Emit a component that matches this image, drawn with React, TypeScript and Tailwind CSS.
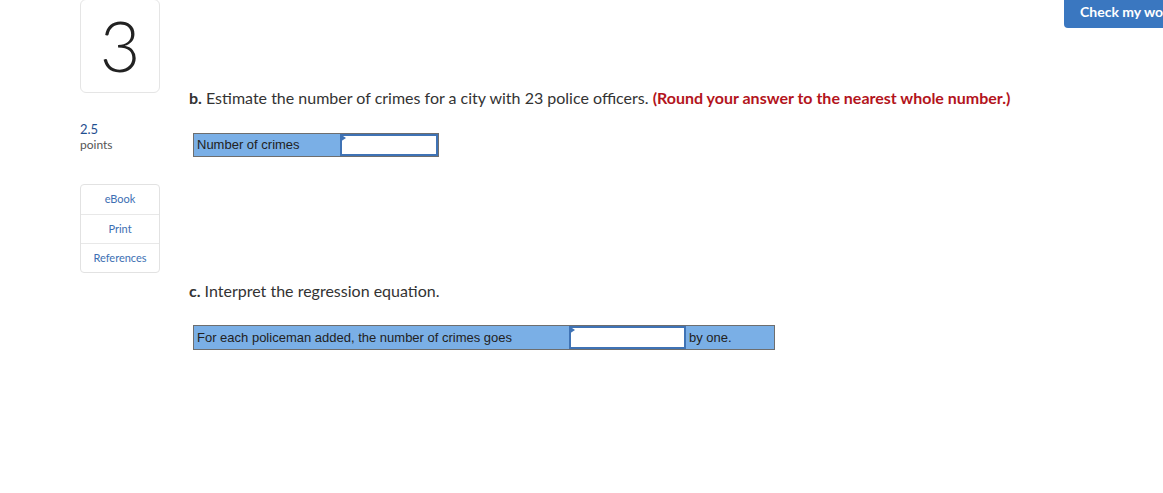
import React from 'react';

function InputCell({ width }: { width: string }) {
  return (
    <div className={`relative ${width} h-full bg-white border-2 border-[#3f73b5]`}>
      {/* small blue corner flag */}
      <span className="absolute -left-[2px] -top-[2px] w-0 h-0 border-t-[4px] border-b-[4px] border-l-[6px] border-t-transparent border-b-transparent border-l-[#3f73b5]" />
    </div>
  );
}

export default function App() {
  return (
    <div className="relative w-[1163px] h-[493px] bg-white overflow-hidden" style={{ fontFamily: 'Lato, "Open Sans", sans-serif' }}>
      <button className="absolute left-[1064px] top-0 h-[28px] w-[120px] pl-[16px] pb-[5px] flex items-center rounded-bl-[4px] bg-[#3a77c0] text-white font-bold text-[14px] whitespace-nowrap">
        Check my work
      </button>

      <div className="flex gap-[29px] pl-[80px]">
        {/* left rail */}
        <div className="flex flex-col w-[80px]">
          <div className="h-[94px] -mt-[1px] border border-[#e5e5e5] rounded-[6px] flex items-center justify-center">
            <span className="text-[70px] font-light text-[#222] leading-none -mt-[2px]">3</span>
          </div>
          <div className="mt-[28px] text-[13px] leading-[16px] text-[#1f4f8f]">2.5</div>
          <div className="text-[12px] leading-[16px] text-[#555]">points</div>
          <div className="mt-[31px] border border-[#e2e2e2] rounded-[4px] flex flex-col text-[11px] text-[#3d6fb3]">
            <div className="h-[30px] flex items-center justify-center border-b border-[#e8e8e8]">eBook</div>
            <div className="h-[29px] flex items-center justify-center border-b border-[#e8e8e8]">Print</div>
            <div className="h-[28px] flex items-center justify-center">References</div>
          </div>
        </div>

        {/* main */}
        <div className="flex flex-col pt-[88px]">
          <p className="text-[16px] leading-[20px] text-[#333]">
            <b className="font-bold">b.</b> Estimate the number of crimes for a city with 23 police officers.{' '}
            <span className="font-bold text-[#b3141c]">(Round your answer to the nearest whole number.)</span>
          </p>
          <div className="mt-[25px] ml-[4px] flex h-[24px] border border-[#6e6e6e] w-[246px] text-[13px] text-[#222]" style={{ fontFamily: '"Liberation Sans", Arial, sans-serif' }}>
            <div className="w-[146px] bg-[#7aafe6] flex items-center pl-[3px]">Number of crimes</div>
            <InputCell width="w-[98px]" />
          </div>

          <p className="mt-[124px] text-[16px] leading-[20px] text-[#333]">
            <b className="font-bold">c.</b> Interpret the regression equation.
          </p>
          <div className="mt-[24px] ml-[4px] flex h-[25px] border border-[#6e6e6e] w-[582px] text-[13px] text-[#222]" style={{ fontFamily: '"Liberation Sans", Arial, sans-serif' }}>
            <div className="w-[375px] bg-[#7aafe6] flex items-center pl-[3px]">For each policeman added, the number of crimes goes</div>
            <InputCell width="w-[117px]" />
            <div className="flex-1 bg-[#7aafe6] flex items-center pl-[3px]">by one.</div>
          </div>
        </div>
      </div>
    </div>
  );
}
